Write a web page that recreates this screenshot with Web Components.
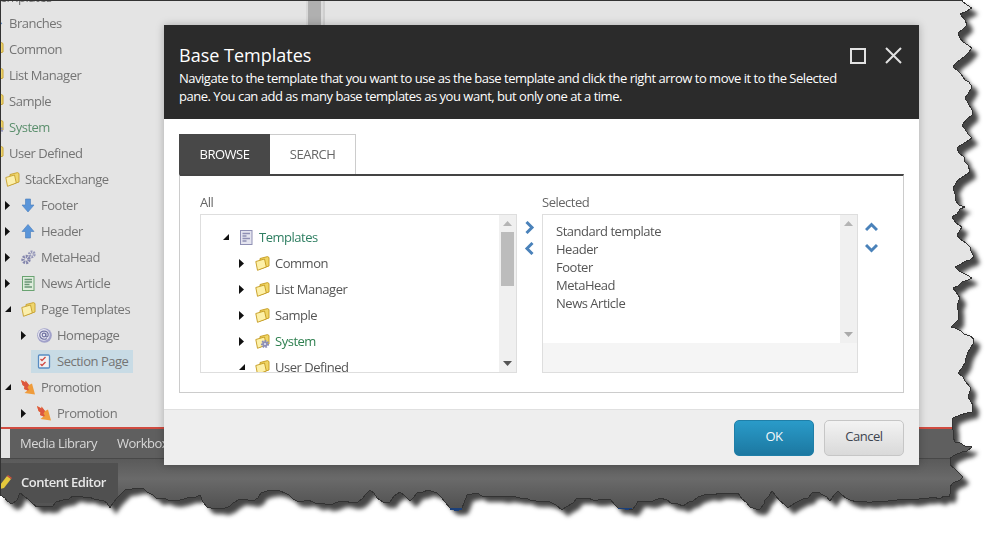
<!DOCTYPE html>
<html>
<head>
<meta charset="utf-8">
<title>Base Templates</title>
<style>
html, body { margin: 0; background: #fff; }
body { font-family: "Open Sans", "Liberation Sans", sans-serif; font-size: 13px; letter-spacing: -.48px; }
</style>
</head>
<body>
<torn-frame>
    <app-panes>
        <content-tree></content-tree>
    </app-panes>
    <app-strip></app-strip>
    <app-taskbar></app-taskbar>
    <base-dialog></base-dialog>
</torn-frame>

<script>
const FOLDER = `<path d="M5 2.500 12.500 .6 14 1.500V10L5 13z" fill="#f0d565" stroke="#c49a1e" stroke-width=".9"/><path d="M.8 5.500 9.500 3 11.300 11 2.500 14.300z" fill="#fdf0a8" stroke="#c49a1e" stroke-width=".9"/>`;
const ICONS = {
    folder: FOLDER,
    system: FOLDER + `<circle cx="10" cy="10" r="2.800" fill="#8d8fb8" stroke="#8d8fb8" stroke-width="2.600" stroke-dasharray="1.500 1"/><circle cx="10" cy="10" r="1.100" fill="#e4e4f0"/>`,
    down: `<path d="M4.500 1h5v6H13l-6 7-6-7h3.500z" fill="#4f8fd8" stroke="#3a74b8" stroke-width=".6"/>`,
    up: `<path d="M4.500 14h5V7.500H13l-6-7-6 7h3.500z" fill="#4f8fd8" stroke="#3a74b8" stroke-width=".6"/>`,
    gears: `<circle cx="5" cy="9.500" r="3" fill="none" stroke="#7b7da8" stroke-width="3.400" stroke-dasharray="1.800 .9"/><circle cx="10.800" cy="4.300" r="2.400" fill="none" stroke="#8f91b6" stroke-width="3" stroke-dasharray="1.500 .8"/>`,
    news: `<rect x="1.500" y=".5" width="11.500" height="14" fill="#dfeedd" stroke="#5f9e68"/><path d="M3.500 3.500h7.500M3.500 6h7.500M3.500 8.500h5M3.500 11h7.500" stroke="#5f8f6c" stroke-width="1.300"/>`,
    at: `<circle cx="7.500" cy="7.500" r="7.300" fill="#9c9cc8"/><circle cx="6.800" cy="6.800" r="5.900" fill="#e6e6f2"/><circle cx="7" cy="7" r="1.800" fill="none" stroke="#6a6c9e" stroke-width="1.200"/><path d="M8.800 5.200v2.800c0 1.400 2.400 1.200 2.400-1 0-5-8.400-5.300-8.400 0 0 4.200 4.600 5 7 3.500" fill="none" stroke="#6a6c9e" stroke-width="1.200"/>`,
    check: `<rect x="1.500" y="1" width="11" height="13" rx="1" fill="#f6f4f4" stroke="#4f86c0" stroke-width="1.300"/><path d="M3.500 5 5 6.500 8.500 3M3.500 10 5 11.500 8.500 8" fill="none" stroke="#d0403a" stroke-width="1.400"/>`,
    flame: `<path d="M0 0 4.500 2.500 4.500 .5 8 5 11 3.500 14 14.500 3.500 13 6.500 10.500 3 9 3.500 6.500 1.500 5z" fill="#f0962e"/><path d="M0 0 4.500 2.500 4.500 .5 8 5 6.500 7.500 8 10 6.500 10.500 3 9 3.500 6.500 1.500 5z" fill="#dc4a32"/>`,
    doc: `<rect x="1.500" y=".5" width="11.500" height="14" fill="#e4e4ef" stroke="#8f90b4"/><path d="M3.500 3.500h7.500M3.500 6h4M3.500 8.500h7.500M3.500 11h4" stroke="#8f90b4" stroke-width="1.300"/>`
};

class TreeRow extends HTMLElement {
    constructor() {
        super();
        this.attachShadow({mode: 'open'});
    }
    connectedCallback() {
        const depth = parseInt(this.getAttribute('depth') || '0', 10);
        const twisty = this.getAttribute('twisty');
        const icon = ICONS[this.getAttribute('icon')] || '';
        let arrow = '';
        if (twisty === 'closed') {
            arrow = '<path d="M0 2 5 6.500 0 11z" fill="#111"/>';
        } else if (twisty === 'open') {
            arrow = '<path d="M6 3v6H0z" fill="#111"/>';
        }
        this.shadowRoot.innerHTML = `
        <style>
        :host { display: flex; align-items: center; height: 26px; white-space: nowrap; padding-left: ${depth * 16}px; }
        svg.tw { width: 7px; height: 13px; margin-right: 3px; flex: none; }
        .node { display: flex; align-items: center; height: 23px; padding: 0 5px 0 6px; }
        :host([selected]) .node { background: var(--selected, #c8dbe5); }
        svg.ic { width: 15px; height: 15px; margin-right: 5px; flex: none; opacity: var(--icon-opacity, 1); }
        </style>
        <svg class="tw" viewBox="0 0 7 13">${arrow}</svg>
        <span class="node"><svg class="ic" viewBox="0 0 15 15">${icon}</svg><slot></slot></span>
        `;
    }
}

class ContentTree extends HTMLElement {
    constructor() {
        super();
        this.attachShadow({mode: 'open'});
        const rows = [
            [0, '', 'doc', 'Templates'],
            [1, '', 'down', 'Branches'],
            [1, '', 'folder', 'Common'],
            [1, '', 'folder', 'List Manager'],
            [1, '', 'folder', 'Sample'],
            [1, '', 'system', 'System', '#5b8f6d'],
            [1, '', 'folder', 'User Defined'],
            [2, '', 'folder', 'StackExchange'],
            [3, 'closed', 'down', 'Footer'],
            [3, 'closed', 'up', 'Header'],
            [3, 'closed', 'gears', 'MetaHead'],
            [3, 'closed', 'news', 'News Article'],
            [3, 'open', 'folder', 'Page Templates'],
            [4, 'closed', 'at', 'Homepage'],
            [4, '', 'check', 'Section Page', '', true],
            [3, 'open', 'flame', 'Promotion'],
            [4, 'closed', 'flame', 'Promotion']
        ];
        this.shadowRoot.innerHTML = `
        <style>
        :host { display: block; margin: -16px 0 0 -43px; color: #747474; --icon-opacity: .92; }
        </style>
        ` + rows.map(r => `<tree-row depth="${r[0]}" twisty="${r[1]}" icon="${r[2]}"${r[5] ? ' selected' : ''}${r[4] ? ` style="color:${r[4]}"` : ''}>${r[3]}</tree-row>`).join('');
    }
}

class AppPanes extends HTMLElement {
    constructor() {
        super();
        this.attachShadow({mode: 'open'});
        this.shadowRoot.innerHTML = `
        <style>
        :host { display: flex; height: 427px; background: #e4e4e4; }
        .tree { width: 306px; overflow: hidden; flex: none; }
        .split { width: 19px; flex: none; display: flex; }
        .split i { display: block; }
        .a { width: 2px; background: #d8d8d8; }
        .b { width: 13px; background: #b0b0b0; }
        .c { width: 2px; background: #dcdcdc; }
        .d { width: 2px; background: #cfcfcf; }
        </style>
        <div class="tree"><slot></slot></div>
        <div class="split"><i class="a"></i><i class="b"></i><i class="c"></i><i class="d"></i></div>
        `;
    }
}

class AppStrip extends HTMLElement {
    constructor() {
        super();
        this.attachShadow({mode: 'open'});
        this.shadowRoot.innerHTML = `
        <style>
        :host { display: flex; align-items: center; height: 29px; background: #5f5f5f; border-top: 2px solid #d04b40; border-bottom: 1px solid #484848; color: #d8d8d8; }
        .stub { width: 10px; height: 100%; background: #e4e4e4; margin-right: 10px; }
        span { margin-right: 20px; padding-bottom: 1px; }
        </style>
        <div class="stub"></div><span>Media Library</span><span>Workbox</span>
        `;
    }
}

class AppTaskbar extends HTMLElement {
    constructor() {
        super();
        this.attachShadow({mode: 'open'});
        this.shadowRoot.innerHTML = `
        <style>
        :host { display: block; height: 74px; padding-top: 4px; box-sizing: border-box; background: linear-gradient(#5a5a5a, #6a6a6a 20px, #525252 48px); }
        .tab { display: flex; align-items: center; width: 118px; height: 40px; padding-bottom: 2px; box-sizing: border-box; background: #505050; color: #e8e8e8; font-weight: 600; white-space: nowrap; }
        svg { width: 13px; height: 15px; margin-right: 8px; flex: none; }
        </style>
        <div class="tab">
            <svg viewBox="0 0 13 15"><path d="M0 10 7 1l4 3-7 9-4 1z" fill="#e4c83c"/><path d="M7 1l1-1 4 3-1 1z" fill="#d0503c"/></svg>
            Content Editor
        </div>
        `;
    }
}

class ListBox extends HTMLElement {
    constructor() {
        super();
        this.attachShadow({mode: 'open'});
        const h = this.hasAttribute('footer') ? 128 : 157;
        const thumb = this.hasAttribute('thumb') ? '<div class="thumb"></div>' : '';
        this.shadowRoot.innerHTML = `
        <style>
        :host { display: flex; flex-direction: column; height: 159px; box-sizing: border-box; border: 1px solid #dedede; background: #f5f5f5; overflow: hidden; }
        .view { display: flex; height: ${h}px; flex: none; background: #fff; }
        .content { flex: 1; overflow: hidden; min-width: 0; }
        .bar { width: 17px; flex: none; display: flex; flex-direction: column; align-items: center; background: #f0f0f0; }
        .btn { height: 17px; flex: none; display: flex; align-items: center; justify-content: center; }
        .btn svg { width: 9px; height: 5px; }
        .thumb { width: 13px; height: 54px; background: #bcbcbc; }
        .gap { flex: 1; }
        </style>
        <div class="view">
            <div class="content"><slot></slot></div>
            <div class="bar">
                <div class="btn"><svg viewBox="0 0 9 5"><path d="M4.500 0 9 5H0z" fill="#b4b4b4"/></svg></div>
                ${thumb}
                <div class="gap"></div>
                <div class="btn"><svg viewBox="0 0 9 5"><path d="M0 0h9L4.500 5z" fill="${this.hasAttribute('thumb') ? '#555' : '#aaa'}"/></svg></div>
            </div>
        </div>
        `;
    }
}

class MoveButtons extends HTMLElement {
    constructor() {
        super();
        this.attachShadow({mode: 'open'});
        const paths = this.getAttribute('dir') === 'vertical'
            ? ['M1 9 6.500 3.500 12 9', 'M1 3 6.500 8.500 12 3']
            : ['M3.500 1 9 6.500 3.500 12', 'M9.500 1 4 6.500 9.500 12'];
        this.shadowRoot.innerHTML = `
        <style>
        :host { display: flex; flex-direction: column; align-items: center; gap: 8px; padding-top: 7px; }
        svg { width: 13px; height: 13px; display: block; }
        path { fill: none; stroke: #4a82ba; stroke-width: 3; }
        </style>
        ${paths.map(d => `<svg viewBox="0 0 13 13"><path d="${d}"/></svg>`).join('')}
        `;
    }
}

class DialogButton extends HTMLElement {
    constructor() {
        super();
        this.attachShadow({mode: 'open'});
        this.shadowRoot.innerHTML = `
        <style>
        :host { display: flex; align-items: center; justify-content: center; width: 80px; height: 36px; padding-bottom: 4px; box-sizing: border-box; border-radius: 5px; border: 1px solid #c6c6c6; background: linear-gradient(#f3f3f3, #d9d9d9); color: #3d4450; }
        :host([primary]) { border-color: #1f7fa8; background: linear-gradient(#2a9bc9, #1c78a1); color: #f4f8fa; }
        </style>
        <slot></slot>
        `;
    }
}

class BaseDialog extends HTMLElement {
    constructor() {
        super();
        this.attachShadow({mode: 'open'});
        const tree = [
            [0, 'open', 'doc', 'Templates', '#2f7f62'],
            [1, 'closed', 'folder', 'Common'],
            [1, 'closed', 'folder', 'List Manager'],
            [1, 'closed', 'folder', 'Sample'],
            [1, 'closed', 'system', 'System', '#2f8050'],
            [1, 'open', 'folder', 'User Defined']
        ];
        const selected = ['Standard template', 'Header', 'Footer', 'MetaHead', 'News Article'];
        this.shadowRoot.innerHTML = `
        <style>
        :host { position: absolute; left: 164px; top: 25px; width: 755px; height: 440px; display: flex; flex-direction: column; background: #fff; color: #555; box-shadow: 0 0 8px rgba(0,0,0,.25); }
        header { position: relative; height: 94px; box-sizing: border-box; padding: 17px 15px 0; background: #2b2b2b; color: #fff; flex: none; }
        h1 { margin: 0 0 1px; font-size: 18px; font-weight: 400; line-height: 26px; letter-spacing: 0; }
        p { margin: 0; font-size: 13px; line-height: 18px; width: 680px; }
        .controls { position: absolute; right: 17px; top: 22px; display: flex; gap: 19px; }
        .controls svg { width: 17px; height: 17px; display: block; fill: none; stroke: #e2e2e2; stroke-width: 2; }
        main { flex: 1; padding: 15px 15px 0; }
        .tabs { display: flex; height: 40px; }
        .tab { display: flex; align-items: center; justify-content: center; box-sizing: border-box; padding-bottom: 1px; }
        .tab.on { width: 91px; background: #484848; color: #fff; }
        .tab.off { width: 86px; border: 1px solid #ccc; border-left: 0; border-bottom: 0; color: #666; }
        .panel { height: 219px; box-sizing: border-box; border: 1px solid #ccc; border-top: 2px solid #444; padding: 17px 0 0 20px; display: grid; grid-template-columns: 317px 25px 316px 26px; grid-template-rows: 18px 159px; row-gap: 3px; }
        label { line-height: 18px; color: #666; }
        .items { padding: 7px 0 0 13px; line-height: 18px; color: #555; }
        .rows { padding: 9px 0 0 22px; }
        footer { height: 56px; box-sizing: border-box; flex: none; display: flex; justify-content: flex-end; align-items: center; gap: 10px; padding: 0 15px 0; background: #eee; border-top: 1px solid #e0e0e0; }
        </style>
        <header>
            <h1>Base Templates</h1>
            <p>Navigate to the template that you want to use as the base template and click the right arrow to move it to the Selected pane. You can add as many base templates as you want, but only one at a time.</p>
            <div class="controls">
                <svg viewBox="0 0 17 17"><rect x="2" y="2" width="14" height="14"/></svg>
                <svg viewBox="0 0 17 17"><path d="M1 1 16 16M16 1 1 16"/></svg>
            </div>
        </header>
        <main>
            <div class="tabs">
                <div class="tab on">BROWSE</div>
                <div class="tab off">SEARCH</div>
            </div>
            <div class="panel">
                <label>All</label><span></span><label>Selected</label><span></span>
                <list-box thumb>
                    <div class="rows">
                    ${tree.map(r => `<tree-row depth="${r[0]}" twisty="${r[1]}" icon="${r[2]}"${r[4] ? ` style="color:${r[4]}"` : ''}>${r[3]}</tree-row>`).join('')}
                    </div>
                </list-box>
                <move-buttons></move-buttons>
                <list-box footer>
                    <div class="items">${selected.map(s => `<div>${s}</div>`).join('')}</div>
                </list-box>
                <move-buttons dir="vertical"></move-buttons>
            </div>
        </main>
        <footer>
            <dialog-button primary>OK</dialog-button>
            <dialog-button>Cancel</dialog-button>
        </footer>
        `;
    }
}

// points of the torn edge, clockwise from the top right corner
const EDGE = [[962,1],[972,8],[960,14],[965,20],[967,25],[958,33],[963,42],[972,48],[953,67],[972,87],[965,98],[972,110],[972,115],[962,125],[972,138],[957,148],[968,165],[970,172],[958,180],[953,188],[955,200],[965,207],[952,217],[962,227],[957,235],[970,247],[974,257],[955,267],[972,278],[953,288],[960,298],[957,305],[958,320],[951,327],[974,339],[965,363],[958,373],[970,387],[968,397],[973,405],[972,412],[953,418],[953,430],[955,442],[972,447],[950,458],[950,465],[963,477],[950,487],[949,497],[907,499],[857,502],[850,500],[838,491],[830,501],[818,492],[803,499],[788,508],[772,491],[760,509],[750,507],[738,493],[723,493],[698,497],[683,506],[660,498],[653,501],[638,501],[632,510],[618,508],[610,499],[593,500],[577,498],[562,510],[550,502],[520,498],[487,496],[477,493],[467,495],[462,508],[450,508],[437,493],[428,490],[417,493],[410,501],[400,492],[390,502],[383,502],[377,498],[370,490],[358,502],[340,501],[333,504],[313,502],[293,499],[280,491],[267,491],[253,501],[240,499],[223,509],[207,507],[200,495],[180,500],[157,499],[143,488],[125,490],[110,508],[103,500],[73,496],[47,507],[37,507],[20,493],[12,504],[0,495]];

function edgePath() {
    let seed = 7;
    const noise = () => { seed = (seed * 16807) % 2147483647; return (seed % 3) - 1; };
    let d = 'M0 0H962';
    for (let i = 0; i < EDGE.length; i++) {
        const p = EDGE[i];
        const q = EDGE[i + 1];
        d += `L${p[0]} ${p[1]}`;
        if (!q) continue;
        const steps = Math.floor(Math.hypot(q[0] - p[0], q[1] - p[1]) / 5);
        for (let s = 1; s < steps; s++) {
            const x = Math.round(p[0] + (q[0] - p[0]) * s / steps);
            const y = Math.round(p[1] + (q[1] - p[1]) * s / steps);
            d += `L${x + noise()} ${y + noise()}`;
        }
    }
    return d + 'Z';
}

class TornFrame extends HTMLElement {
    constructor() {
        super();
        this.attachShadow({mode: 'open'});
        const d = edgePath();
        this.shadowRoot.innerHTML = `
        <style>
        :host { display: block; position: relative; width: 997px; height: 533px; overflow: hidden; background: #fff; }
        .shadow { height: 100%; filter: drop-shadow(6px 6px 2px rgba(60,60,60,.95)); }
        .window { position: relative; height: 100%; clip-path: path('${d}'); background: #5f5f5f; }
        svg { position: absolute; left: 0; top: 0; width: 997px; height: 533px; pointer-events: none; }
        </style>
        <div class="shadow"><div class="window"><slot></slot></div></div>
        <svg viewBox="0 0 997 533" shape-rendering="crispEdges">
            <path d="${d}" fill="none" stroke="#333" stroke-width="1"/>
            <path d="M450 507.500h12v2h-3v1h-5v-1h-4zM618 507.500h14v1h-3v1h-4v-1h-7z" fill="#1b3f78"/>
        </svg>
        `;
    }
}

customElements.define('tree-row', TreeRow);
customElements.define('content-tree', ContentTree);
customElements.define('app-panes', AppPanes);
customElements.define('app-strip', AppStrip);
customElements.define('app-taskbar', AppTaskbar);
customElements.define('list-box', ListBox);
customElements.define('move-buttons', MoveButtons);
customElements.define('dialog-button', DialogButton);
customElements.define('base-dialog', BaseDialog);
customElements.define('torn-frame', TornFrame);
</script>
</body>
</html>
